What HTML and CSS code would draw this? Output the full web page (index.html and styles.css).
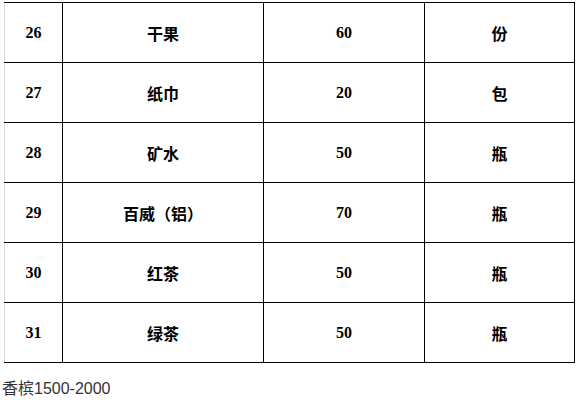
FILE: index.html
```html
<!DOCTYPE html>
<html lang="zh">
<head>
<meta charset="utf-8">
<link rel="stylesheet" href="styles.css">
</head>
<body>
<table class="menu">
  <colgroup>
    <col class="c-no"><col class="c-name"><col class="c-price"><col class="c-unit">
  </colgroup>
  <tbody>
    <tr><td class="no">26</td><td>干果</td><td>60</td><td>份</td></tr>
    <tr><td class="no">27</td><td>纸巾</td><td>20</td><td>包</td></tr>
    <tr><td class="no">28</td><td>矿水</td><td>50</td><td>瓶</td></tr>
    <tr><td class="no">29</td><td>百威（铝）</td><td>70</td><td>瓶</td></tr>
    <tr><td class="no">30</td><td>红茶</td><td>50</td><td>瓶</td></tr>
    <tr><td class="no">31</td><td>绿茶</td><td>50</td><td>瓶</td></tr>
  </tbody>
</table>
<p class="note">香槟1500-2000</p>
</body>
</html>
```

FILE: styles.css
```css
html, body {
  margin: 0;
  padding: 0;
  background: #fff;
}
.menu {
  margin: 2px 0 0 4px;
  border-collapse: collapse;
  table-layout: fixed;
  width: 570px;
  font-family: "Liberation Serif", "Noto Sans CJK SC", serif;
  font-weight: bold;
  font-size: 16px;
  color: #000;
}
.c-no { width: 58px; }
.c-name { width: 201px; }
.c-price { width: 161px; }
.c-unit { width: 150px; }
.menu td {
  border: 1px solid #000;
  height: 59px;
  padding: 0;
  text-align: center;
  vertical-align: middle;
}
.menu td.no {
  border-left-color: #d8d8d8;
}
.note {
  margin: 16px 0 0 2px;
  font-family: "Liberation Sans", "Noto Sans CJK SC", sans-serif;
  font-size: 16px;
  line-height: 20px;
  color: #333;
}
```
